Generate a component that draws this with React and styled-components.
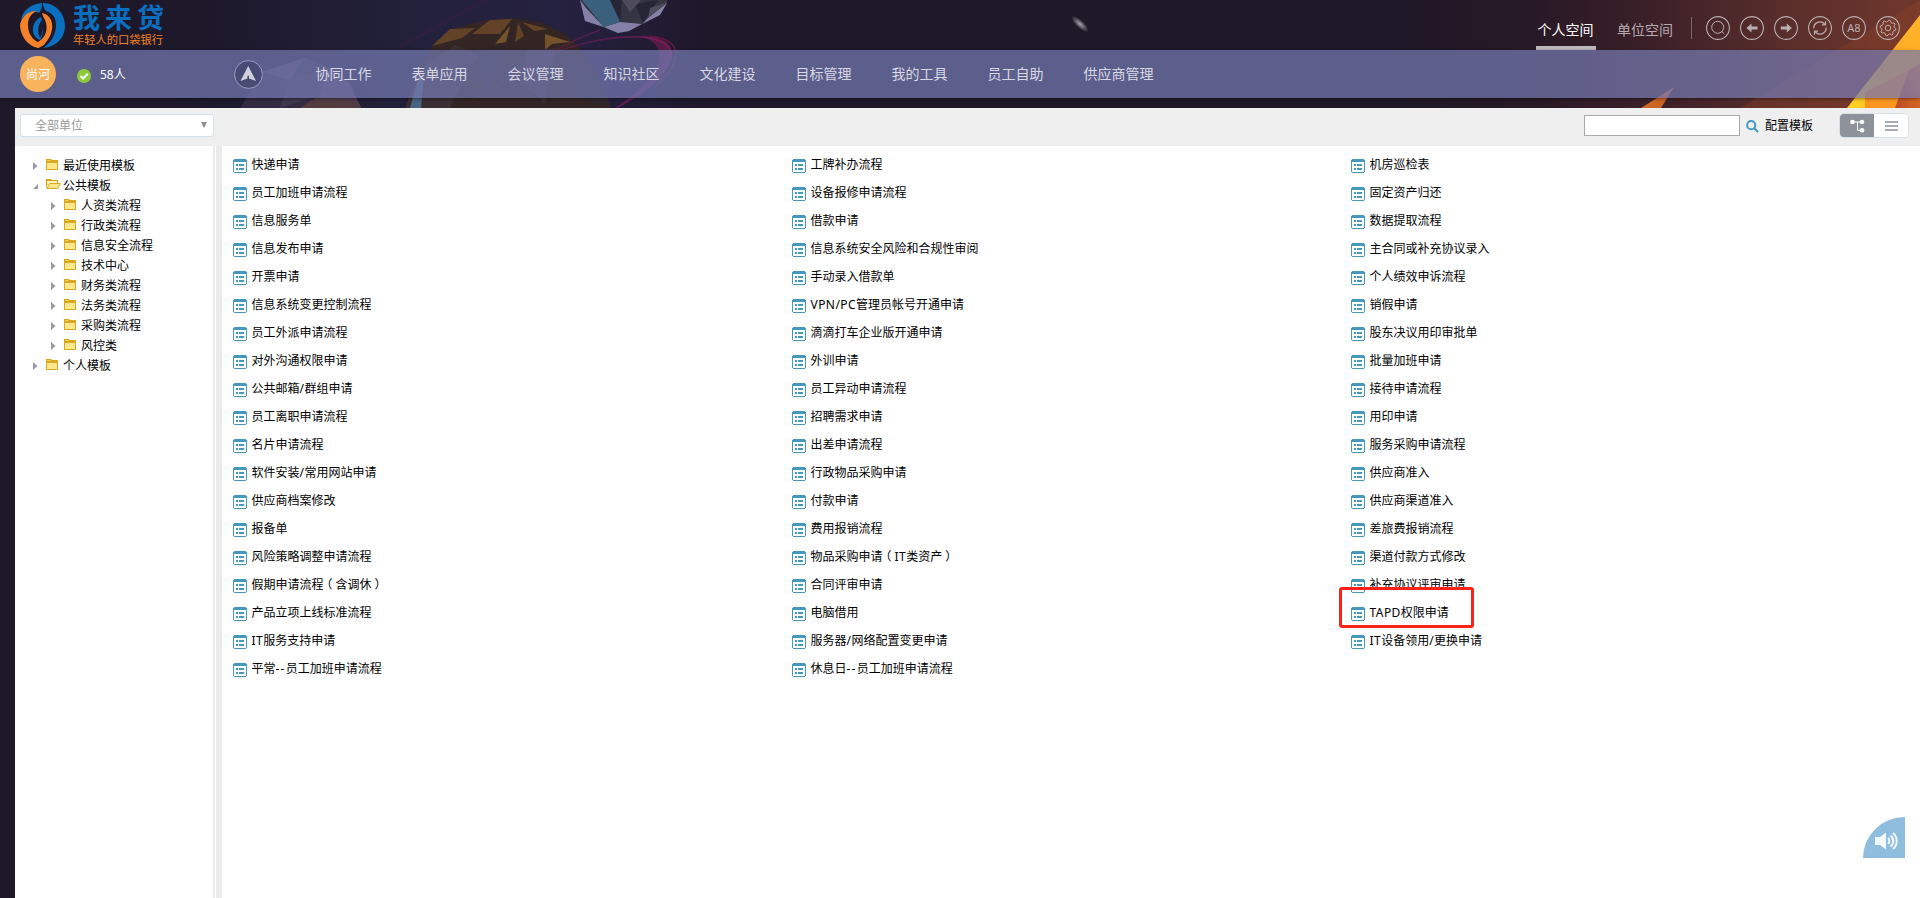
import React from "react";
import styled, { createGlobalStyle } from "styled-components";

const Global = createGlobalStyle`
  * { box-sizing: border-box; }
  html, body { margin: 0; height: 100%; overflow: hidden; }
  body {
    font-family: "Noto Sans", "Noto Sans CJK SC", sans-serif;
    font-size: 12px;
    color: #000;
    background: #1e1828;
  }
`;

const Page = styled.div`
  position: relative;
  isolation: isolate;
  width: 1920px;
  height: 898px;
  display: flex;
  flex-direction: column;
  overflow: hidden;
`;

const Backdrop = styled.svg`
  position: absolute;
  top: 0;
  left: 0;
  z-index: -1;
`;

const Header = styled.header`
  height: 50px;
  flex: none;
  display: flex;
  justify-content: space-between;
  padding: 0 20px;
`;

const Logo = styled.div`
  display: flex;
  gap: 8px;
  padding-top: 3px;
`;

const LogoText = styled.div`
  display: flex;
  flex-direction: column;
`;

const LogoName = styled.div`
  height: 30px;
  line-height: 30px;
  font-size: 27px;
  font-weight: 700;
  letter-spacing: 5px;
  color: #0a6fbe;
  white-space: nowrap;
`;

const LogoSlogan = styled.div`
  height: 14px;
  line-height: 14px;
  font-size: 11.25px;
  color: #f08226;
  white-space: nowrap;
`;

const HeaderRight = styled.div`
  display: flex;
  align-items: flex-start;
`;

const SpaceTab = styled.div`
  width: 60px;
  height: 50px;
  margin-right: ${(p) => (p.$active ? 19.5 : 16)}px;
  padding-top: 18px;
  line-height: 24px;
  font-size: 14px;
  text-align: center;
  white-space: nowrap;
  color: ${(p) => (p.$active ? "#fff" : "#b5abb1")};
  border-bottom: 4px solid ${(p) => (p.$active ? "#beb7bd" : "transparent")};
`;

const Divider = styled.div`
  width: 1px;
  height: 22px;
  margin: 17px 14px 0 0;
  background: #75676d;
`;

const HeaderIcons = styled.div`
  display: flex;
  gap: 10px;
  padding-top: 16px;
`;

const Nav = styled.nav`
  height: 48px;
  flex: none;
  display: flex;
  align-items: center;
  padding-left: 20px;
  background: rgba(116, 122, 178, 0.72);
  box-shadow: 0 1px 3px rgba(0, 0, 0, 0.4);
`;

const Avatar = styled.div`
  width: 36px;
  height: 36px;
  border-radius: 50%;
  background: #f9b35c;
  color: #fff;
  line-height: 37px;
  text-align: center;
  white-space: nowrap;
`;

const Online = styled.div`
  display: flex;
  align-items: center;
  gap: 9px;
  width: 157px;
  margin-left: 21px;
  padding-top: 3px;
  color: #fff;
`;

const OnlineCount = styled.span`
  line-height: 16px;
  margin-top: -2px;
`;

const Menu = styled.div`
  display: flex;
  gap: 40px;
  margin-left: 52.5px;
`;

const MenuItem = styled.a`
  font-size: 14px;
  line-height: 24px;
  color: #d8d8e4;
  white-space: nowrap;
`;

const Workspace = styled.main`
  flex: 1;
  min-height: 0;
  margin: 10px 0 0 15px;
  display: flex;
  flex-direction: column;
  background: #fff;
`;

const Toolbar = styled.div`
  height: 38px;
  flex: none;
  display: flex;
  align-items: flex-start;
  background: #efefef;
  padding: 5px 11px 0 5px;
`;

const UnitSelect = styled.div`
  width: 194px;
  height: 23px;
  margin-top: 1px;
  display: flex;
  justify-content: space-between;
  padding: 0 6px 0 14px;
  line-height: 22px;
  color: #999;
  background: #fff;
  border: 1px solid #d4e0ea;
  border-radius: 3px;
`;

const Caret = styled.span`
  width: 0;
  height: 0;
  margin-top: 7px;
  border: 3px solid transparent;
  border-top: 6px solid #8d8d8d;
  border-bottom: 0;
`;

const SearchInput = styled.input`
  width: 156px;
  height: 21px;
  margin: 2px 6px 0 auto;
  padding: 0 4px;
  border: 1px solid #a9a9a9;
  background: #fff;
  outline: none;
`;

const SearchIcon = styled.svg`
  margin-top: 7px;
`;

const ConfigLink = styled.a`
  margin: 4px 26px 0 6px;
  line-height: 18px;
  white-space: nowrap;
`;

const ViewToggle = styled.div`
  width: 70px;
  height: 25px;
  display: flex;
  overflow: hidden;
  border: 1px solid #d9e0ea;
  border-radius: 5px;
`;

const ToggleButton = styled.div`
  flex: 1;
  display: flex;
  align-items: center;
  justify-content: center;
  background: ${(p) => (p.$active ? "#8e929b" : "#fff")};
`;

const Body = styled.div`
  flex: 1;
  display: flex;
`;

const Sidebar = styled.aside`
  width: 200px;
  padding: 9px 0 0 18px;
  border-right: 2px solid #ebebeb;
`;

const TreeRow = styled.div`
  height: 20px;
  display: flex;
  align-items: center;
  padding-left: ${(p) => p.$level * 18}px;
`;

const Arrow = styled.svg`
  margin: 1px 8px 0 0;
  flex: none;
`;

const TreeLabel = styled.span`
  margin-left: 2px;
  line-height: 20px;
  padding-top: 2px;
  white-space: nowrap;
`;

const Splitter = styled.div`
  width: 6px;
  margin-left: 1px;
  background: #ebebeb;
`;

const Columns = styled.section`
  flex: 1;
  display: grid;
  grid-template-columns: repeat(3, 559px);
  align-content: start;
  padding: 5px 0 0 11px;
`;

const Template = styled.div`
  height: 28px;
  display: flex;
  align-items: center;
`;

const FormGlyph = styled.svg`
  flex: none;
  margin-top: 2px;
`;

const TemplateName = styled.span`
  margin: -1px 0 0 4.5px;
  line-height: 20px;
  white-space: nowrap;
`;

const Latin = styled.span`
  letter-spacing: ${(p) => (p.$dash ? 1.2 : 0.45)}px;
`;

const OpenParen = styled.span`
  margin: 0 3px 0 -3px;
`;

const CloseParen = styled.span`
  margin: 0 -3px 0 3px;
`;

const Highlight = styled.div`
  position: absolute;
  left: 1339px;
  top: 587px;
  width: 135px;
  height: 41px;
  border: 3px solid #fb2217;
  border-radius: 3px;
`;

const Speaker = styled.div`
  position: absolute;
  left: 1863px;
  top: 817px;
  width: 42px;
  height: 41px;
  background: #8fbddd;
  border-top-left-radius: 42px 41px;
  padding: 14px 0 0 11px;
`;

function SpaceArt() {
  return (
    <Backdrop width="1920" height="108" viewBox="0 0 1920 108">
      <defs>
        <linearGradient id="sky" x1="0" x2="1">
          <stop offset="0" stopColor="#1e1828" />
          <stop offset="0.1" stopColor="#1d182a" />
          <stop offset="0.2" stopColor="#222039" />
          <stop offset="0.29" stopColor="#252140" />
          <stop offset="0.37" stopColor="#1e182a" />
          <stop offset="0.72" stopColor="#1e1828" />
          <stop offset="0.8" stopColor="#281926" />
          <stop offset="0.86" stopColor="#3b2028" />
          <stop offset="0.93" stopColor="#592e2b" />
          <stop offset="1" stopColor="#70372c" />
        </linearGradient>
        <linearGradient id="flare" x1="0" y1="1" x2="1" y2="0">
          <stop offset="0" stopColor="#ffd426" />
          <stop offset="0.5" stopColor="#ffab20" />
          <stop offset="1" stopColor="#ffb32b" />
        </linearGradient>
        <linearGradient id="ember" x1="0" y1="1" x2="1" y2="0">
          <stop offset="0" stopColor="#b94b25" />
          <stop offset="1" stopColor="#ee7c22" />
        </linearGradient>
        <radialGradient id="comet">
          <stop offset="0" stopColor="#a9a3ad" />
          <stop offset="1" stopColor="#a9a3ad" stopOpacity="0" />
        </radialGradient>
        <linearGradient id="trail" x1="0" x2="1">
          <stop offset="0" stopColor="#8a1a68" stopOpacity="0.1" />
          <stop offset="0.7" stopColor="#8a1a68" stopOpacity="0.5" />
          <stop offset="1" stopColor="#8c1d54" stopOpacity="0.8" />
        </linearGradient>
      </defs>
      <rect width="1920" height="108" fill="url(#sky)" />
      <path d="M400 47 L485 0" stroke="#5a1646" strokeWidth="1" opacity="0.6" />
      <g opacity="0.6">
        <path d="M240 108 L262 72 L305 58 L330 67 L350 84 L361 108Z" fill="#40354f" />
        <path d="M262 72 L305 58 L290 80Z M315 108 L330 67 L350 84 L361 108Z" fill="#685071" />
        <path d="M290 80 L330 67 L320 95 L280 108Z" fill="#514560" />
        <path d="M300 108 L318 96 L358 101 L361 108Z" fill="#725049" />
      </g>
      <path d="M405 108 L418 70 L432 46 L450 30 L480 21 L512 18 L540 22 L562 32 L578 45 L596 75 L612 108Z" fill="#322523" />
      <path d="M432 46 L450 29 L475 28 L462 38Z M472 34 L490 20 L512 19 L500 34Z M515 42 L518 22 L524 36Z M522 22 L548 29 L534 31Z" fill="#614226" />
      <path d="M495 44 L510 26 L506 42Z M545 34 L570 42 L552 44 L545 50Z" fill="#75532a" />
      <path d="M420 70 L455 45 L478 55 L450 108 L405 108Z M525 50 L556 48 L545 104 L524 84Z" fill="#3a2e32" />
      <path d="M478 50 L504 46 L488 99Z M564 52 L596 75 L612 108 L580 98Z" fill="#2d262b" />
      <path d="M410 108 L418 80 L424 76 L421 108Z" fill="#48637f" />
      <path d="M580 0 L585 21 L618 33 L629 31 L660 15 L667 3 L667 0Z" fill="#353443" />
      <path d="M580 0 L585 21 L604 27 L586 8Z M604 27 L620 22 L642 24 L629 31 L618 33Z M642 24 L660 15 L667 3 L648 18Z" fill="#8580a7" />
      <path d="M582 0 L610 0 L620 22 L604 27 L590 10Z" fill="#39617d" />
      <path d="M610 0 L622 0 L620 20Z M635 4 L658 0 L643 23Z" fill="#252536" />
      <path d="M622 0 L641 0 L630 12Z M650 8 L667 2 L648 18Z" fill="#4d4b5c" />
      <path d="M460 108 C500 88 545 50 600 30 M545 56 C600 34 650 32 665 44 C685 60 650 90 616 108" stroke="url(#trail)" strokeWidth="1.5" fill="none" />
      <path d="M640 36 C692 36 678 75 615 108 C665 76 672 45 640 36Z" fill="#8d1c62" opacity="0.5" />
      <path d="M650 36 C685 40 682 62 655 87" stroke="#64173d" strokeWidth="1.5" fill="none" />
      <ellipse cx="1080" cy="24" rx="11" ry="4" fill="url(#comet)" transform="rotate(43 1080 24)" />
      <path d="M1740 108 L1920 0 L1920 108Z" fill="#a04924" opacity="0.25" />
      <path d="M1674 87 L1641 108 L1661 108Z" fill="#cb6425" />
      <path d="M1920 15 L1847 108 L1920 108Z" fill="url(#flare)" />
      <path d="M1920 64 L1909 70 L1865 92 L1865 108 L1920 108Z" fill="#fa9520" />
      <path d="M1920 64 L1909 70 L1895 108 L1920 108Z" fill="url(#ember)" />
    </Backdrop>
  );
}

function LogoMark() {
  return (
    <svg width="45" height="45" viewBox="0 0 45 45">
      <path d="M22 0 C9 1 2 9 1 17 C7 9 14 7 19 10 C22 7 22 3 22 0Z" fill="#0a6fbe" />
      <path d="M17 8 C7 7 0 16 0 23 C1 34 8 43 18 45 L25 41 C15 40 8 33 8 22 C8 14 12 10 17 8Z" fill="#f5822a" />
      <path d="M23 0 C36 0 45 11 45 23 C45 35 36 44 23 45 C31 40 36 31 36 22 C36 14 32 10 26 8 C24 6 23 3 23 0Z" fill="#0a6fbe" />
      <path d="M22 10 C33 12 36 26 27 38 C24 42 21 44 18 45 L16 40 C25 36 28 28 26 20 C25 16 23 14 22 10Z" fill="#f5822a" />
      <path d="M21 14 C15 17 12 23 13 29 C14 33 17 36 20 37 C24 31 24 23 21 14Z" fill="#0a6fbe" />
      <path d="M22 17 C18 21 17 29 20 35 C23 30 24 22 22 17Z" fill="#1e1828" />
    </svg>
  );
}

function CircleIcon({ children }) {
  return (
    <svg width="24" height="24" viewBox="0 0 24 24" fill="none" stroke="#b9aeb1">
      <circle cx="12" cy="12" r="11.4" strokeWidth="1.1" />
      {children}
    </svg>
  );
}

const gearPath = Array.from({ length: 32 }, (_, i) => {
  const r = i % 4 < 2 ? 7.9 : 6.2;
  const a = ((i + 0.5) / 32) * Math.PI * 2;
  return `${i ? "L" : "M"}${(12 + r * Math.cos(a)).toFixed(2)} ${(12 + r * Math.sin(a)).toFixed(2)}`;
}).join(" ") + "Z";

function HeaderTools() {
  return (
    <HeaderIcons>
      <CircleIcon>
        <circle cx="11.7" cy="11.3" r="6" />
        <path d="M16 15.6 L18.3 17.8" />
      </CircleIcon>
      <CircleIcon>
        <path d="M6.5 12 L11.5 7.5 V10.5 H17.5 V13.5 H11.5 V16.5Z" fill="#b9aeb1" stroke="none" />
      </CircleIcon>
      <CircleIcon>
        <path d="M17.8 12 L12.8 7.5 V10.5 H6.8 V13.5 H12.8 V16.5Z" fill="#b9aeb1" stroke="none" />
      </CircleIcon>
      <CircleIcon>
        <path d="M5.8 12.5 A6.2 6.2 0 0 1 16.6 8 M18.2 11.5 A6.2 6.2 0 0 1 7.4 16 M17.5 5.3 V8.9 H13.9 M6.5 18.7 V15.1 H10.1" strokeWidth="1.2" />
      </CircleIcon>
      <CircleIcon>
        <text x="12" y="16" textAnchor="middle" fontSize="11" fill="#b9aeb1" stroke="none">A8</text>
      </CircleIcon>
      <CircleIcon>
        <path d={gearPath} strokeLinejoin="round" />
        <circle cx="12" cy="12" r="2.8" />
      </CircleIcon>
    </HeaderIcons>
  );
}

function Folder({ open }) {
  return (
    <svg width="15" height="12" viewBox="0 0 15 12">
      {open ? (
        <>
          <path d="M0 0 H5 L6 1 H12 V4 H2 L0 10Z" fill="#d6a419" />
          <path d="M1 5 V2 H11 V4 H3Z" fill="#fff1b8" />
          <path d="M3.5 4.5 H14.3 L11.5 9.5 H1Z" fill="#fde78f" stroke="#dda928" />
        </>
      ) : (
        <>
          <path d="M0 0 H5 L6 1 H12 V11 H0Z" fill="#dba921" />
          <path d="M1 4 H11 V10 H1Z" fill="#fde78f" />
          <path d="M1 1.5 H4.5" stroke="#f8cf4c" />
        </>
      )}
    </svg>
  );
}

function FormIcon() {
  return (
    <FormGlyph width="14" height="14" viewBox="0 0 14 14" shapeRendering="crispEdges">
      <path d="M1 0 H13 V1 H14 V13 H13 V14 H1 V13 H0 V1 H1Z" fill="#4499c0" />
      <path d="M1 3 H13 V13 H1Z" fill="#fff" />
      <path d="M3 5 H5 V7 H3Z M6 5 H11 V7 H6Z M3 9 H5 V11 H3Z M6 9 H11 V11 H6Z" fill="#4499c0" />
    </FormGlyph>
  );
}

function Label({ text }) {
  return text.split(/([A-Z/]+|-+|（|）)/).filter(Boolean).map((part, i) => {
    if (part === "（") return <OpenParen key={i}>{part}</OpenParen>;
    if (part === "）") return <CloseParen key={i}>{part}</CloseParen>;
    if (/^[A-Z/-]+$/.test(part)) return <Latin key={i} $dash={part[0] === "-"}>{part}</Latin>;
    return part;
  });
}

const menu = ["协同工作", "表单应用", "会议管理", "知识社区", "文化建设", "目标管理", "我的工具", "员工自助", "供应商管理"];

const tree = [
  { label: "最近使用模板", level: 0 },
  { label: "公共模板", level: 0, open: true },
  { label: "人资类流程", level: 1 },
  { label: "行政类流程", level: 1 },
  { label: "信息安全流程", level: 1 },
  { label: "技术中心", level: 1 },
  { label: "财务类流程", level: 1 },
  { label: "法务类流程", level: 1 },
  { label: "采购类流程", level: 1 },
  { label: "风控类", level: 1 },
  { label: "个人模板", level: 0 },
];

const templates = [
  "快递申请", "工牌补办流程", "机房巡检表",
  "员工加班申请流程", "设备报修申请流程", "固定资产归还",
  "信息服务单", "借款申请", "数据提取流程",
  "信息发布申请", "信息系统安全风险和合规性审阅", "主合同或补充协议录入",
  "开票申请", "手动录入借款单", "个人绩效申诉流程",
  "信息系统变更控制流程", "VPN/PC管理员帐号开通申请", "销假申请",
  "员工外派申请流程", "滴滴打车企业版开通申请", "股东决议用印审批单",
  "对外沟通权限申请", "外训申请", "批量加班申请",
  "公共邮箱/群组申请", "员工异动申请流程", "接待申请流程",
  "员工离职申请流程", "招聘需求申请", "用印申请",
  "名片申请流程", "出差申请流程", "服务采购申请流程",
  "软件安装/常用网站申请", "行政物品采购申请", "供应商准入",
  "供应商档案修改", "付款申请", "供应商渠道准入",
  "报备单", "费用报销流程", "差旅费报销流程",
  "风险策略调整申请流程", "物品采购申请（IT类资产）", "渠道付款方式修改",
  "假期申请流程（含调休）", "合同评审申请", "补充协议评审申请",
  "产品立项上线标准流程", "电脑借用", "TAPD权限申请",
  "IT服务支持申请", "服务器/网络配置变更申请", "IT设备领用/更换申请",
  "平常--员工加班申请流程", "休息日--员工加班申请流程",
];

export default function App() {
  return (
    <>
      <Global />
      <Page>
        <SpaceArt />
        <Header>
          <Logo>
            <LogoMark />
            <LogoText>
              <LogoName>我来贷</LogoName>
              <LogoSlogan>年轻人的口袋银行</LogoSlogan>
            </LogoText>
          </Logo>
          <HeaderRight>
            <SpaceTab $active>个人空间</SpaceTab>
            <SpaceTab>单位空间</SpaceTab>
            <Divider />
            <HeaderTools />
          </HeaderRight>
        </Header>
        <Nav>
          <Avatar>尚河</Avatar>
          <Online>
            <svg width="14" height="14" viewBox="0 0 14 14">
              <circle cx="7" cy="7" r="7" fill="#8ccb36" />
              <path d="M3.5 7 L6.2 9.5 L10.7 4.8" fill="none" stroke="#fff" strokeWidth="2" />
            </svg>
            <OnlineCount>58人</OnlineCount>
          </Online>
          <svg width="29" height="29" viewBox="0 0 29 29">
            <circle cx="14.5" cy="14.5" r="13.9" fill="#484c75" stroke="#9a9dbd" />
            <path d="M14.2 6 L22 21 L15 18.5 V16 L14.2 15.5 L13.4 16 V18.5 L6.5 21Z" fill="#d0d1dc" />
          </svg>
          <Menu>
            {menu.map((m) => <MenuItem key={m}>{m}</MenuItem>)}
          </Menu>
        </Nav>
        <Workspace>
          <Toolbar>
            <UnitSelect>全部单位<Caret /></UnitSelect>
            <SearchInput />
            <SearchIcon width="13" height="13" viewBox="0 0 13 13" fill="none" stroke="#429bc1" strokeWidth="2">
              <circle cx="5.2" cy="5.2" r="4.1" />
              <path d="M8.3 8.3 L12 12" />
            </SearchIcon>
            <ConfigLink>配置模板</ConfigLink>
            <ViewToggle>
              <ToggleButton $active>
                <svg width="15" height="14" viewBox="0 0 15 14" fill="#fff">
                  <circle cx="2.5" cy="3" r="2.3" />
                  <circle cx="12" cy="3" r="2.3" />
                  <circle cx="12" cy="11.3" r="2.3" />
                  <path d="M2.5 3 H12 M7.5 3 V11.3 H12" fill="none" stroke="#fff" />
                </svg>
              </ToggleButton>
              <ToggleButton>
                <svg width="13" height="12" viewBox="0 0 13 12" stroke="#a9abb8" strokeWidth="2">
                  <path d="M0 2 H13 M0 6 H13 M0 10 H13" />
                </svg>
              </ToggleButton>
            </ViewToggle>
          </Toolbar>
          <Body>
            <Sidebar>
              {tree.map((n) => (
                <TreeRow key={n.label} $level={n.level}>
                  <Arrow width="5" height="8" viewBox="0 0 5 8" fill="#999ba3">
                    <path d={n.open ? "M5 2 V7 H0Z" : "M0 0 L4.5 4 L0 8Z"} />
                  </Arrow>
                  <Folder open={n.open} />
                  <TreeLabel>{n.label}</TreeLabel>
                </TreeRow>
              ))}
            </Sidebar>
            <Splitter />
            <Columns>
              {templates.map((t) => (
                <Template key={t}>
                  <FormIcon />
                  <TemplateName><Label text={t} /></TemplateName>
                </Template>
              ))}
            </Columns>
          </Body>
        </Workspace>
        <Highlight />
        <Speaker>
          <svg width="26" height="20" viewBox="0 0 26 20">
            <path d="M1 6 H6 L12 1.5 V18.5 L6 14 H1Z" fill="#f3f8fc" />
            <path d="M14 7 A4 4 0 0 1 14 13 M16.5 4.5 A7 7 0 0 1 16.5 15.5 M19 2 A10.5 10.5 0 0 1 19 18" fill="none" stroke="#f3f8fc" strokeWidth="2" />
          </svg>
        </Speaker>
      </Page>
    </>
  );
}
